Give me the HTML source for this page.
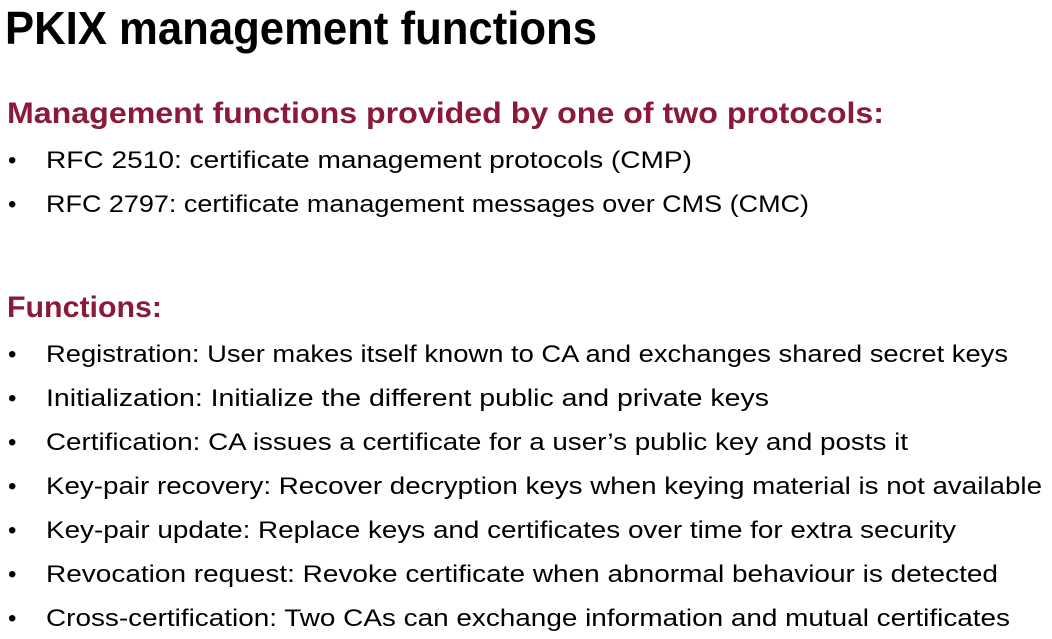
<!DOCTYPE html>
<html><head><meta charset="utf-8"><style>
html,body{margin:0;padding:0;background:#fff;width:1052px;height:639px;overflow:hidden}
svg{display:block}
text{font-family:"Liberation Sans",sans-serif}
.b{font-size:24px;fill:#000}
.h{font-size:30px;font-weight:bold;fill:#8b1a3a}
</style></head><body>
<svg width="1052" height="639" viewBox="0 0 1052 639" xmlns="http://www.w3.org/2000/svg">
<text x="5" y="44" font-size="46" font-weight="bold" textLength="592" lengthAdjust="spacingAndGlyphs">PKIX management functions</text>
<text class="h" x="7" y="123" textLength="877" lengthAdjust="spacingAndGlyphs">Management functions provided by one of two protocols:</text>
<text class="b" x="8" y="168">•</text>
<text class="b" x="46" y="168" textLength="646" lengthAdjust="spacingAndGlyphs">RFC 2510: certificate management protocols (CMP)</text>
<text class="b" x="8" y="212">•</text>
<text class="b" x="46" y="212" textLength="763" lengthAdjust="spacingAndGlyphs">RFC 2797: certificate management messages over CMS (CMC)</text>
<text class="h" x="7" y="317" textLength="155" lengthAdjust="spacingAndGlyphs">Functions:</text>
<text class="b" x="8" y="362">•</text>
<text class="b" x="46" y="362" textLength="962" lengthAdjust="spacingAndGlyphs">Registration: User makes itself known to CA and exchanges shared secret keys</text>
<text class="b" x="8" y="406">•</text>
<text class="b" x="46" y="406" textLength="723" lengthAdjust="spacingAndGlyphs">Initialization: Initialize the different public and private keys</text>
<text class="b" x="8" y="450">•</text>
<text class="b" x="46" y="450" textLength="862" lengthAdjust="spacingAndGlyphs">Certification: CA issues a certificate for a user’s public key and posts it</text>
<text class="b" x="8" y="494">•</text>
<text class="b" x="46" y="494" textLength="996" lengthAdjust="spacingAndGlyphs">Key-pair recovery: Recover decryption keys when keying material is not available</text>
<text class="b" x="8" y="538">•</text>
<text class="b" x="46" y="538" textLength="910" lengthAdjust="spacingAndGlyphs">Key-pair update: Replace keys and certificates over time for extra security</text>
<text class="b" x="8" y="582">•</text>
<text class="b" x="46" y="582" textLength="952" lengthAdjust="spacingAndGlyphs">Revocation request: Revoke certificate when abnormal behaviour is detected</text>
<text class="b" x="8" y="626">•</text>
<text class="b" x="46" y="626" textLength="964" lengthAdjust="spacingAndGlyphs">Cross-certification: Two CAs can exchange information and mutual certificates</text>
</svg>
</body></html>
